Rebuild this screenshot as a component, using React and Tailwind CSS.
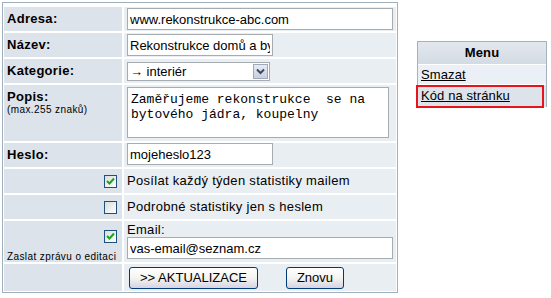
import React from 'react';

const sans = { fontFamily: '"Liberation Sans", Arial, sans-serif' };

function Check({ checked }) {
  return (
    <span className="inline-flex w-[13px] h-[13px] border border-[#1c5180] bg-gradient-to-br from-[#dcdcd7] to-white items-center justify-center">
      {checked && (
        <svg width="9" height="9" viewBox="0 0 9 9">
          <path d="M1 4 L3.5 6.5 L8 1.5" stroke="#21a121" strokeWidth="2" fill="none" />
        </svg>
      )}
    </span>
  );
}

function Label({ children, className = '' }) {
  return <div className={`bg-[#dce3ea] px-[3px] ${className}`}>{children}</div>;
}

function Value({ children, className = '' }) {
  return <div className={`bg-[#e9eef3] px-[3px] ${className}`}>{children}</div>;
}

function XpButton({ children, className = '' }) {
  return (
    <button className={`h-[22px] border border-[#003c74] rounded-[3px] bg-gradient-to-b from-white via-[#f4f4f0] to-[#d6d3e4] text-[13px] text-black leading-none tracking-normal ${className}`}>
      {children}
    </button>
  );
}

export default function App() {
  const input = 'border border-[#a5acb2] bg-white h-[22px] px-[2px] text-[13px] leading-[20px] text-black outline-none tracking-normal';

  return (
    <div className="flex items-start bg-white text-black text-[13px] tracking-[0.3px] w-[551px] h-[298px]" style={sans}>
      <div className="ml-[2px] mt-[2px] w-[396px] border border-[#9fb0bc] pt-[4px] pb-[1px] px-[1px]">
        <div className="grid grid-cols-[118px_272px] gap-x-[2px] gap-y-[2px]">
          <Label className="h-[24px] flex items-center font-bold">Adresa:</Label>
          <Value className="h-[24px] flex items-start pt-[1px]">
            <input className={`${input} w-[266px]`} defaultValue="www.rekonstrukce-abc.com" />
          </Value>

          <Label className="h-[24px] flex items-center font-bold">Název:</Label>
          <Value className="h-[24px] flex items-center">
            <input className={`${input} w-[146px]`} defaultValue="Rekonstrukce domů a bytů" />
          </Value>

          <Label className="h-[24px] flex items-center font-bold">Kategorie:</Label>
          <Value className="h-[24px] flex items-center">
            <div className="w-[143px] h-[19px] border border-[#a5acb2] bg-white flex items-center justify-between">
              <span className="pl-[2px] text-[13px] leading-none tracking-normal">→ interiér</span>
              <span className="w-[15px] h-[15px] mr-[1px] border border-[#a0a8bb] bg-gradient-to-b from-[#e8ebf2] to-[#c9d0de] flex items-center justify-center">
                <svg width="9" height="7" viewBox="0 0 9 7">
                  <path d="M1 1.5 L4.5 5 L8 1.5" stroke="#3b4a6b" strokeWidth="2" fill="none" />
                </svg>
              </span>
            </div>
          </Value>

          <Label className="h-[56px] pt-[4px]">
            <div className="font-bold leading-[15px]">Popis:</div>
            <div className="text-[10px] leading-[12px] tracking-[0.4px]">(max.255 znaků)</div>
          </Label>
          <Value className="h-[56px] pt-[2px]">
            <textarea
              className="w-[262px] h-[51px] border border-[#a5acb2] bg-white px-[3px] py-[4px] text-[13px] leading-[15px] tracking-normal resize-none outline-none overflow-hidden"
              style={{ fontFamily: '"Liberation Mono", "Courier New", monospace' }}
              defaultValue={'Zaměřujeme rekonstrukce  se na bytového jádra, koupelny'}
            />
          </Value>

          <Label className="h-[24px] flex items-center font-bold">Heslo:</Label>
          <Value className="h-[24px] flex items-start">
            <input className={`${input} w-[146px]`} defaultValue="mojeheslo123" />
          </Value>

          <Label className="h-[24px] flex items-center justify-end pr-[5px]"><Check checked /></Label>
          <Value className="h-[24px] flex items-center">Posílat každý týden statistiky mailem</Value>

          <Label className="h-[24px] flex items-center justify-end pr-[5px]"><Check /></Label>
          <Value className="h-[24px] flex items-center">Podrobné statistiky jen s heslem</Value>

          <Label className="h-[41px] flex flex-col items-end pt-[6px]">
            <span className="pr-[2px]"><Check checked /></span>
            <span className="self-start text-[10px] leading-[12px] tracking-[0.4px] mt-[4px]">Zaslat zprávu o editaci</span>
          </Label>
          <Value className="h-[41px]">
            <div className="leading-[15px] pt-[1px]">Email:</div>
            <input className={`${input} w-[266px]`} defaultValue="vas-email@seznam.cz" />
          </Value>

          <Label className="h-[27px]" />
          <Value className="h-[27px] flex items-center pl-[5px]">
            <XpButton className="w-[129px]">&gt;&gt; AKTUALIZACE</XpButton>
            <XpButton className="w-[58px] ml-[28px]">Znovu</XpButton>
          </Value>
        </div>
      </div>

      <div className="relative ml-[19px] mt-[41px] w-[130px] border border-[#a3b3bf] border-b-0 tracking-[0.1px]">
        <div className="h-[22px] bg-gradient-to-b from-[#e3e8ed] to-[#d3dbe3] flex items-center justify-center font-bold">Menu</div>
        <div className="h-[20px] bg-[#eaf0f5] border-t border-white flex items-center pl-[3px]">
          <a href="#" className="underline text-black">Smazat</a>
        </div>
        <div className="h-[23px] bg-[#dde3ea] border-t border-white flex items-center pl-[3px]">
          <a href="#" className="underline text-black">Kód na stránku</a>
        </div>
        <div className="absolute left-[-2px] top-[43px] w-[128px] h-[23px] border-2 border-[#e8141b]" />
      </div>
    </div>
  );
}
